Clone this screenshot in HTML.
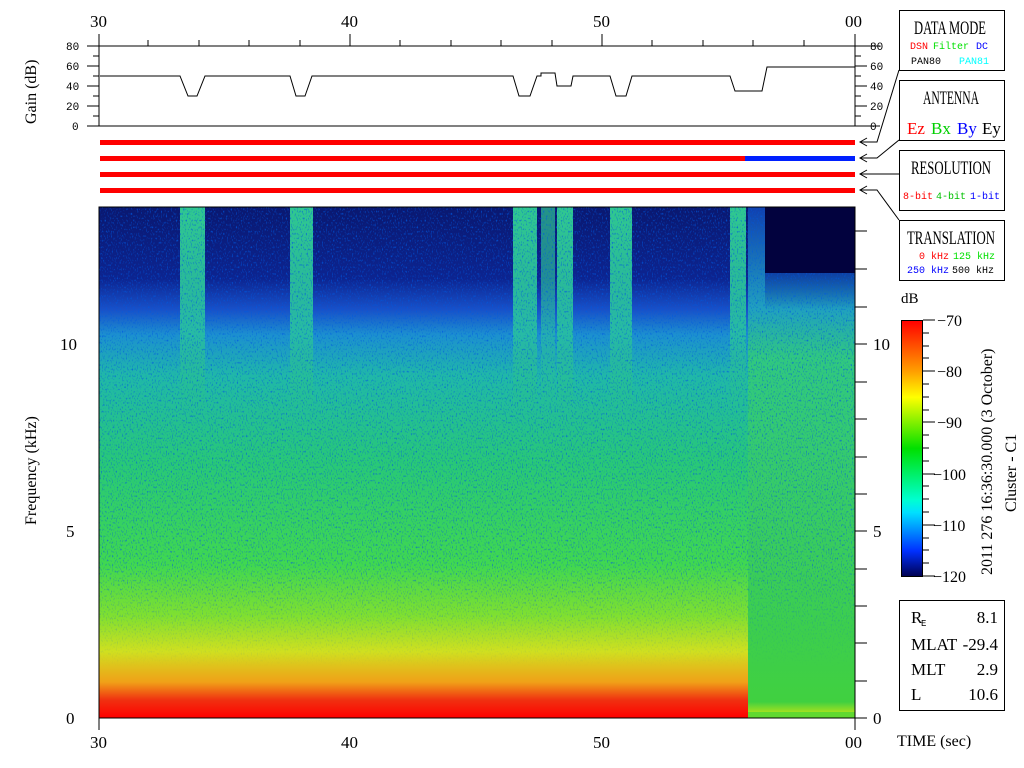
<!DOCTYPE html>
<html><head><meta charset="utf-8"><style>
html,body{margin:0;padding:0;background:#fff;width:1024px;height:768px;overflow:hidden}
svg text{font-family:"Liberation Serif",serif}
svg .m text, svg text.m{font-family:"Liberation Mono",monospace}
</style></head><body>
<svg width="1024" height="768" xmlns="http://www.w3.org/2000/svg">
<defs>
<linearGradient id="base" x1="0" y1="0" x2="0" y2="1">
<stop offset="0" stop-color="#0a1870"/>
<stop offset="0.14" stop-color="#0c2490"/>
<stop offset="0.2" stop-color="#1850c8"/>
<stop offset="0.25" stop-color="#1c90d0"/>
<stop offset="0.33" stop-color="#20b8a8"/>
<stop offset="0.5" stop-color="#28c878"/>
<stop offset="0.7" stop-color="#40d850"/>
<stop offset="0.8" stop-color="#80e030"/>
<stop offset="0.87" stop-color="#d0e020"/>
<stop offset="0.93" stop-color="#f0a018"/>
<stop offset="0.965" stop-color="#f03010"/>
<stop offset="1" stop-color="#ff0000"/>
</linearGradient>
<linearGradient id="stripe" x1="0" y1="0" x2="0" y2="1">
<stop offset="0" stop-color="#30c890"/>
<stop offset="0.25" stop-color="#28c0a0" stop-opacity="0.9"/>
<stop offset="0.4" stop-color="#30c870" stop-opacity="0"/>
</linearGradient>
<linearGradient id="right" x1="0" y1="0" x2="0" y2="1">
<stop offset="0" stop-color="#1040b0"/>
<stop offset="0.2" stop-color="#20a0c0"/>
<stop offset="0.3" stop-color="#30c880"/>
<stop offset="0.98" stop-color="#40d040"/>
<stop offset="1" stop-color="#a0e020"/>
</linearGradient>
<linearGradient id="dk" x1="0" y1="0" x2="0" y2="1">
<stop offset="0" stop-color="#0a2a9a" stop-opacity="0.8"/>
<stop offset="1" stop-color="#0a2a9a" stop-opacity="0"/>
</linearGradient>
<linearGradient id="cb" x1="0" y1="0" x2="0" y2="1">
<stop offset="0" stop-color="#ff0000"/>
<stop offset="0.2" stop-color="#ffa000"/>
<stop offset="0.3" stop-color="#ffff00"/>
<stop offset="0.5" stop-color="#00e000"/>
<stop offset="0.7" stop-color="#00ffd0"/>
<stop offset="0.75" stop-color="#00e0ff"/>
<stop offset="0.9" stop-color="#0030ff"/>
<stop offset="1" stop-color="#000050"/>
</linearGradient>
<linearGradient id="nmask" x1="0" y1="0" x2="0" y2="1">
<stop offset="0" stop-color="#fff"/>
<stop offset="0.7" stop-color="#fff" stop-opacity="0.8"/>
<stop offset="0.9" stop-color="#fff" stop-opacity="0"/>
</linearGradient>
<mask id="mk"><rect x="99" y="207" width="756" height="511" fill="url(#nmask)"/></mask>
<filter id="nz" x="0" y="0" width="100%" height="100%">
<feTurbulence type="fractalNoise" baseFrequency="0.8 0.45" numOctaves="1" seed="3"/>
<feColorMatrix values="0 0 0 0 0  0 0 0 0 0.1  0 0 0 0 0.75  0 0 0 3.2 -1.75"/>
<feComposite in2="SourceGraphic" operator="in"/>
</filter>
</defs>

<g font-size="17" fill="#000">
<text x="90" y="27">30</text><text x="341" y="27">40</text><text x="593" y="27">50</text><text x="845" y="27">00</text>
</g>
<g stroke="#000" stroke-width="1">
<line x1="99" y1="34" x2="99" y2="126"/>
<line x1="855" y1="34" x2="855" y2="126"/>
<line x1="87" y1="46" x2="880" y2="46"/>
<line x1="87" y1="126" x2="880" y2="126"/>
<line x1="148" y1="40" x2="148" y2="46"/><line x1="199" y1="40" x2="199" y2="46"/><line x1="249" y1="40" x2="249" y2="46"/><line x1="300" y1="40" x2="300" y2="46"/><line x1="350" y1="34" x2="350" y2="46"/><line x1="400" y1="40" x2="400" y2="46"/><line x1="451" y1="40" x2="451" y2="46"/><line x1="501" y1="40" x2="501" y2="46"/><line x1="552" y1="40" x2="552" y2="46"/><line x1="602" y1="34" x2="602" y2="46"/><line x1="652" y1="40" x2="652" y2="46"/><line x1="703" y1="40" x2="703" y2="46"/><line x1="753" y1="40" x2="753" y2="46"/><line x1="804" y1="40" x2="804" y2="46"/>
<line x1="93" y1="56" x2="99" y2="56"/><line x1="87" y1="66" x2="99" y2="66"/><line x1="93" y1="76" x2="99" y2="76"/><line x1="87" y1="86" x2="99" y2="86"/><line x1="93" y1="96" x2="99" y2="96"/><line x1="87" y1="106" x2="99" y2="106"/><line x1="93" y1="116" x2="99" y2="116"/>
<line x1="855" y1="56" x2="861" y2="56"/><line x1="855" y1="66" x2="867" y2="66"/><line x1="855" y1="76" x2="861" y2="76"/><line x1="855" y1="86" x2="867" y2="86"/><line x1="855" y1="96" x2="861" y2="96"/><line x1="855" y1="106" x2="867" y2="106"/><line x1="855" y1="116" x2="861" y2="116"/>
</g>
<g class="m" font-size="11" fill="#000">
<text x="66" y="50">80</text><text x="66" y="70">60</text><text x="66" y="90">40</text><text x="66" y="110">20</text><text x="72" y="130">0</text>
<text x="870" y="50">80</text><text x="870" y="70">60</text><text x="870" y="90">40</text><text x="870" y="110">20</text><text x="870" y="130">0</text>
</g>
<text x="0" y="0" font-size="16" transform="translate(36,124) rotate(-90)">Gain (dB)</text>
<polyline fill="none" stroke="#000" stroke-width="1" points="100,76 180,76 188,96 197,96 205,76 290,76 296,96 305,96 312,76 513,76 519,96 530,96 537,76 541,76 541,73 555,73 557,86 571,86 573,76 610,76 616,96 626,96 632,76 730,76 735,91 762,91 767,67 855,67"/>

<rect x="100" y="140" width="755" height="5" fill="#ff0000"/>
<rect x="100" y="156" width="645" height="5" fill="#ff0000"/>
<rect x="745" y="156" width="110" height="5" fill="#0020ff"/>
<rect x="100" y="172" width="755" height="5" fill="#ff0000"/>
<rect x="100" y="188" width="755" height="5" fill="#ff0000"/>

<g>
<rect x="99" y="207" width="756" height="511" fill="url(#base)"/>
<g fill="url(#stripe)">
<rect x="180" y="207" width="25" height="511"/>
<rect x="290" y="207" width="23" height="511"/>
<rect x="513" y="207" width="24" height="511"/>
<rect x="541" y="207" width="14" height="511" opacity="0.7"/>
<rect x="557" y="207" width="16" height="511"/>
<rect x="610" y="207" width="22" height="511"/>
<rect x="730" y="207" width="16" height="511"/>
</g>
<rect x="748" y="207" width="107" height="505" fill="url(#right)"/>
<rect x="748" y="712" width="107" height="6" fill="#60d830"/>
<rect x="765" y="270" width="90" height="40" fill="url(#dk)"/>
<g mask="url(#mk)"><rect x="99" y="207" width="756" height="511" fill="#fff" filter="url(#nz)"/></g>
<rect x="765" y="207" width="90" height="66" fill="#02023e"/>
<rect x="99" y="207" width="756" height="511" fill="none" stroke="#000"/>
</g>
<g stroke="#000">
<line x1="855" y1="718" x2="855" y2="730"/><line x1="99" y1="718" x2="99" y2="730"/>
<line x1="855" y1="231" x2="867" y2="231"/><line x1="855" y1="269" x2="867" y2="269"/><line x1="855" y1="307" x2="867" y2="307"/><line x1="855" y1="344" x2="867" y2="344"/><line x1="855" y1="382" x2="867" y2="382"/><line x1="855" y1="419" x2="867" y2="419"/><line x1="855" y1="457" x2="867" y2="457"/><line x1="855" y1="494" x2="867" y2="494"/><line x1="855" y1="531" x2="867" y2="531"/><line x1="855" y1="569" x2="867" y2="569"/><line x1="855" y1="606" x2="867" y2="606"/><line x1="855" y1="643" x2="867" y2="643"/><line x1="855" y1="681" x2="867" y2="681"/><line x1="855" y1="718" x2="867" y2="718"/>
</g>
<g font-size="17" fill="#000">
<text x="90" y="748">30</text><text x="341" y="748">40</text><text x="593" y="748">50</text><text x="845" y="748">00</text>
<text x="60" y="350">10</text><text x="66" y="537">5</text><text x="66" y="724">0</text>
<text x="873" y="350">10</text><text x="873" y="537">5</text><text x="873" y="724">0</text>
<text x="897" y="746" font-size="16">TIME (sec)</text>
</g>
<text font-size="16" transform="translate(36,525) rotate(-90)">Frequency (kHz)</text>

<g fill="#fff" stroke="#000">
<rect x="899.5" y="10.5" width="105" height="60"/>
<rect x="899.5" y="80.5" width="105" height="60"/>
<rect x="899.5" y="150.5" width="105" height="60"/>
<rect x="899.5" y="220.5" width="105" height="60"/>
<rect x="899.5" y="600.5" width="105" height="110"/>
</g>
<g stroke="#000" fill="none">
<polyline points="899,70 877,142 860,142"/>
<polyline points="899,140 877,158 860,158"/>
<polyline points="899,174 860,174"/>
<polyline points="899,220 877,190 860,190"/>
<polyline points="867,138 860,142 867,146"/><polyline points="867,154 860,158 867,162"/><polyline points="867,170 860,174 867,178"/><polyline points="867,186 860,190 867,194"/>
</g>
<g font-size="19" fill="#000">
<text x="914" y="34" textLength="72" lengthAdjust="spacingAndGlyphs">DATA MODE</text>
<text x="923" y="104" textLength="56" lengthAdjust="spacingAndGlyphs">ANTENNA</text>
<text x="911" y="174" textLength="80" lengthAdjust="spacingAndGlyphs">RESOLUTION</text>
<text x="907" y="244" textLength="88" lengthAdjust="spacingAndGlyphs">TRANSLATION</text>
</g>
<g class="m" font-size="10">
<text x="910" y="49" fill="#ff0000">DSN</text><text x="933" y="49" fill="#00e000">Filter</text><text x="976" y="49" fill="#0000ff">DC</text>
<text x="911" y="64" fill="#000">PAN80</text><text x="959" y="64" fill="#00ffff">PAN81</text>
<text x="903" y="199" fill="#ff0000">8-bit</text><text x="936" y="199" fill="#00c000">4-bit</text><text x="970" y="199" fill="#0000ff">1-bit</text>
<text x="919" y="259" fill="#ff0000">0 kHz</text><text x="953" y="259" fill="#00e000">125 kHz</text>
<text x="907" y="273" fill="#0000ff">250 kHz</text><text x="952" y="273" fill="#000">500 kHz</text>
</g>
<g font-size="17">
<text x="907" y="134" fill="#ff0000">Ez</text><text x="931" y="134" fill="#00d000">Bx</text><text x="957" y="134" fill="#0000ff">By</text><text x="982" y="134" fill="#000">Ey</text>
</g>

<text x="901" y="303" font-size="15">dB</text>
<rect x="901.5" y="320.5" width="21" height="256" fill="url(#cb)" stroke="#000"/>
<g stroke="#000">
<line x1="923" y1="320" x2="935" y2="320"/><line x1="923" y1="333" x2="929" y2="333"/><line x1="923" y1="346" x2="929" y2="346"/><line x1="923" y1="358" x2="929" y2="358"/><line x1="923" y1="371" x2="935" y2="371"/><line x1="923" y1="384" x2="929" y2="384"/><line x1="923" y1="397" x2="929" y2="397"/><line x1="923" y1="410" x2="929" y2="410"/><line x1="923" y1="422" x2="935" y2="422"/><line x1="923" y1="435" x2="929" y2="435"/><line x1="923" y1="448" x2="929" y2="448"/><line x1="923" y1="461" x2="929" y2="461"/><line x1="923" y1="474" x2="935" y2="474"/><line x1="923" y1="486" x2="929" y2="486"/><line x1="923" y1="499" x2="929" y2="499"/><line x1="923" y1="512" x2="929" y2="512"/><line x1="923" y1="525" x2="935" y2="525"/><line x1="923" y1="538" x2="929" y2="538"/><line x1="923" y1="550" x2="929" y2="550"/><line x1="923" y1="563" x2="929" y2="563"/><line x1="923" y1="576" x2="935" y2="576"/>
</g>
<g font-size="16" fill="#000">
<text x="937" y="326">−70</text><text x="937" y="377">−80</text><text x="937" y="428">−90</text><text x="933" y="480">−100</text><text x="933" y="531">−110</text><text x="933" y="582">−120</text>
</g>
<text font-size="16" transform="translate(992,575) rotate(-90)">2011 276 16:36:30.000 (3 October)</text>
<text font-size="16" transform="translate(1016,512) rotate(-90)">Cluster - C1</text>

<g font-size="17" fill="#000">
<text x="911" y="623">R</text><text x="921" y="626" font-size="9" class="m">E</text><text x="998" y="623" text-anchor="end">8.1</text>
<text x="911" y="650">MLAT</text><text x="998" y="650" text-anchor="end">-29.4</text>
<text x="911" y="675">MLT</text><text x="998" y="675" text-anchor="end">2.9</text>
<text x="911" y="700">L</text><text x="998" y="700" text-anchor="end">10.6</text>
</g>
</svg>
</body></html>
